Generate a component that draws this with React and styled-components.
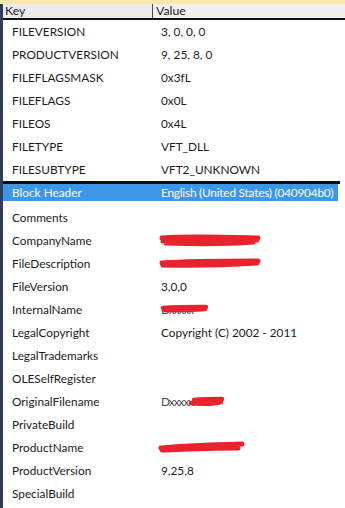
import React from 'react';
import styled, { createGlobalStyle } from 'styled-components';

const GlobalStyle = createGlobalStyle`
  html, body {
    margin: 0;
    padding: 0;
    background: #ffffff;
  }
  body {
    font-family: 'Segoe UI', Lato, 'Noto Sans', sans-serif;
    font-size: 11.8px;
    color: #1b1b1b;
  }
`;

const Window = styled.div`
  width: 345px;
  height: 508px;
  display: flex;
  flex-direction: column;
  overflow: hidden;
  background: #ffffff;
`;

const TopStrip = styled.div`
  height: 4px;
  background: #fce8ac;
  flex: none;
`;

const Frame = styled.div`
  flex: 1;
  display: flex;
  flex-direction: column;
  border-left: 3px solid #2f3c59;
`;

const HeaderRow = styled.div`
  height: 14px;
  display: grid;
  grid-template-columns: 149px 1fr;
  background: #efefef;
  border-bottom: 2px solid #111111;
  flex: none;
  font-size: 12.3px;
`;

const HeaderCell = styled.div`
  display: flex;
  align-items: center;
  padding-left: ${p => (p.first ? '2px' : '3px')};
  border-left: ${p => (p.first ? 'none' : '1px solid #4a4a4a')};
  background: ${p => (p.first ? '#ebebeb' : '#f0f0f0')};
  line-height: 14px;
`;

const Section = styled.div`
  display: flex;
  flex-direction: column;
`;

const Row = styled.div`
  height: ${p => (p.selected ? '17px' : '23px')};
  margin-bottom: ${p => (p.selected ? '5px' : '0')};
  margin-right: ${p => (p.selected ? '7px' : '0')};
  display: grid;
  grid-template-columns: 149px 1fr;
  align-items: center;
  background: ${p => (p.selected ? '#3c97e9' : 'transparent')};
  color: ${p => (p.selected ? '#ffffff' : '#1b1b1b')};
`;

const KeyCell = styled.div`
  padding-left: 9px;
  white-space: nowrap;
`;

const ValueCell = styled.div`
  padding-left: 9px;
  white-space: nowrap;
  position: relative;
  height: 100%;
  display: flex;
  align-items: center;
  letter-spacing: ${p => (p.tight ? '-0.2px' : 'normal')};
`;

const Divider = styled.div`
  height: 3px;
  background: #0d0d0d;
  margin-right: 5px;
`;

const Scribble = styled.svg`
  position: absolute;
  left: 6px;
  top: 0;
  overflow: visible;
`;

const Hidden = styled.span`
  color: #4a4a4a;
  letter-spacing: -1px;
`;

// red marker strokes drawn over hidden values
const marks = {
  company: (
    <Scribble width="110" height="23">
      <path d="M4 9 C30 7 60 8 100 9 M5 12 C40 13 70 13 99 11 M8 14 C40 15 70 15 95 13"
        stroke="#e8232d" strokeWidth="5" fill="none" strokeLinecap="round" />
    </Scribble>
  ),
  description: (
    <Scribble width="110" height="23">
      <path d="M4 11 C30 9 60 9 100 9 M5 13 C40 14 70 13 99 11"
        stroke="#e8232d" strokeWidth="5" fill="none" strokeLinecap="round" />
    </Scribble>
  ),
  internal: (
    <Scribble width="60" height="23">
      <path d="M5 10 C20 9 35 9 48 9 M6 12 C20 12 35 12 47 11"
        stroke="#e8232d" strokeWidth="4.5" fill="none" strokeLinecap="round" />
    </Scribble>
  ),
  original: (
    <Scribble width="80" height="23">
      <path d="M36 10 C45 9 55 9 64 9 M33 13 C45 14 56 14 63 12"
        stroke="#e8232d" strokeWidth="4.5" fill="none" strokeLinecap="round" />
    </Scribble>
  ),
  product: (
    <Scribble width="100" height="23">
      <path d="M3 12 C25 10 50 9 84 8 M4 14 C30 13 55 12 80 12"
        stroke="#e8232d" strokeWidth="5" fill="none" strokeLinecap="round" />
    </Scribble>
  ),
};

const fixedInfo = [
  ['FILEVERSION', '3, 0, 0, 0'],
  ['PRODUCTVERSION', '9, 25, 8, 0'],
  ['FILEFLAGSMASK', '0x3fL'],
  ['FILEFLAGS', '0x0L'],
  ['FILEOS', '0x4L'],
  ['FILETYPE', 'VFT_DLL'],
  ['FILESUBTYPE', 'VFT2_UNKNOWN'],
];

const stringInfo = [
  ['Comments', ''],
  ['CompanyName', '', 'company'],
  ['FileDescription', '', 'description'],
  ['FileVersion', '3,0,0'],
  ['InternalName', '', 'internal', 'Dxxxxx'],
  ['LegalCopyright', 'Copyright (C) 2002 - 2011'],
  ['LegalTrademarks', ''],
  ['OLESelfRegister', ''],
  ['OriginalFilename', '', 'original', 'Dxxxxxxxx'],
  ['PrivateBuild', ''],
  ['ProductName', '', 'product'],
  ['ProductVersion', '9,25,8'],
  ['SpecialBuild', ''],
];

export default function App() {
  return (
    <Window>
      <GlobalStyle />
      <TopStrip />
      <Frame>
        <HeaderRow>
          <HeaderCell first>Key</HeaderCell>
          <HeaderCell>Value</HeaderCell>
        </HeaderRow>
        <Section>
          {fixedInfo.map(([k, v]) => (
            <Row key={k}>
              <KeyCell>{k}</KeyCell>
              <ValueCell>{v}</ValueCell>
            </Row>
          ))}
        </Section>
        <Divider />
        <Section>
          <Row selected>
            <KeyCell>Block Header</KeyCell>
            <ValueCell tight>English (United States) (040904b0)</ValueCell>
          </Row>
          {stringInfo.map(([k, v, mark, under]) => (
            <Row key={k}>
              <KeyCell>{k}</KeyCell>
              <ValueCell>
                {under && <Hidden>{under}</Hidden>}
                {v}
                {mark && marks[mark]}
              </ValueCell>
            </Row>
          ))}
        </Section>
      </Frame>
    </Window>
  );
}
